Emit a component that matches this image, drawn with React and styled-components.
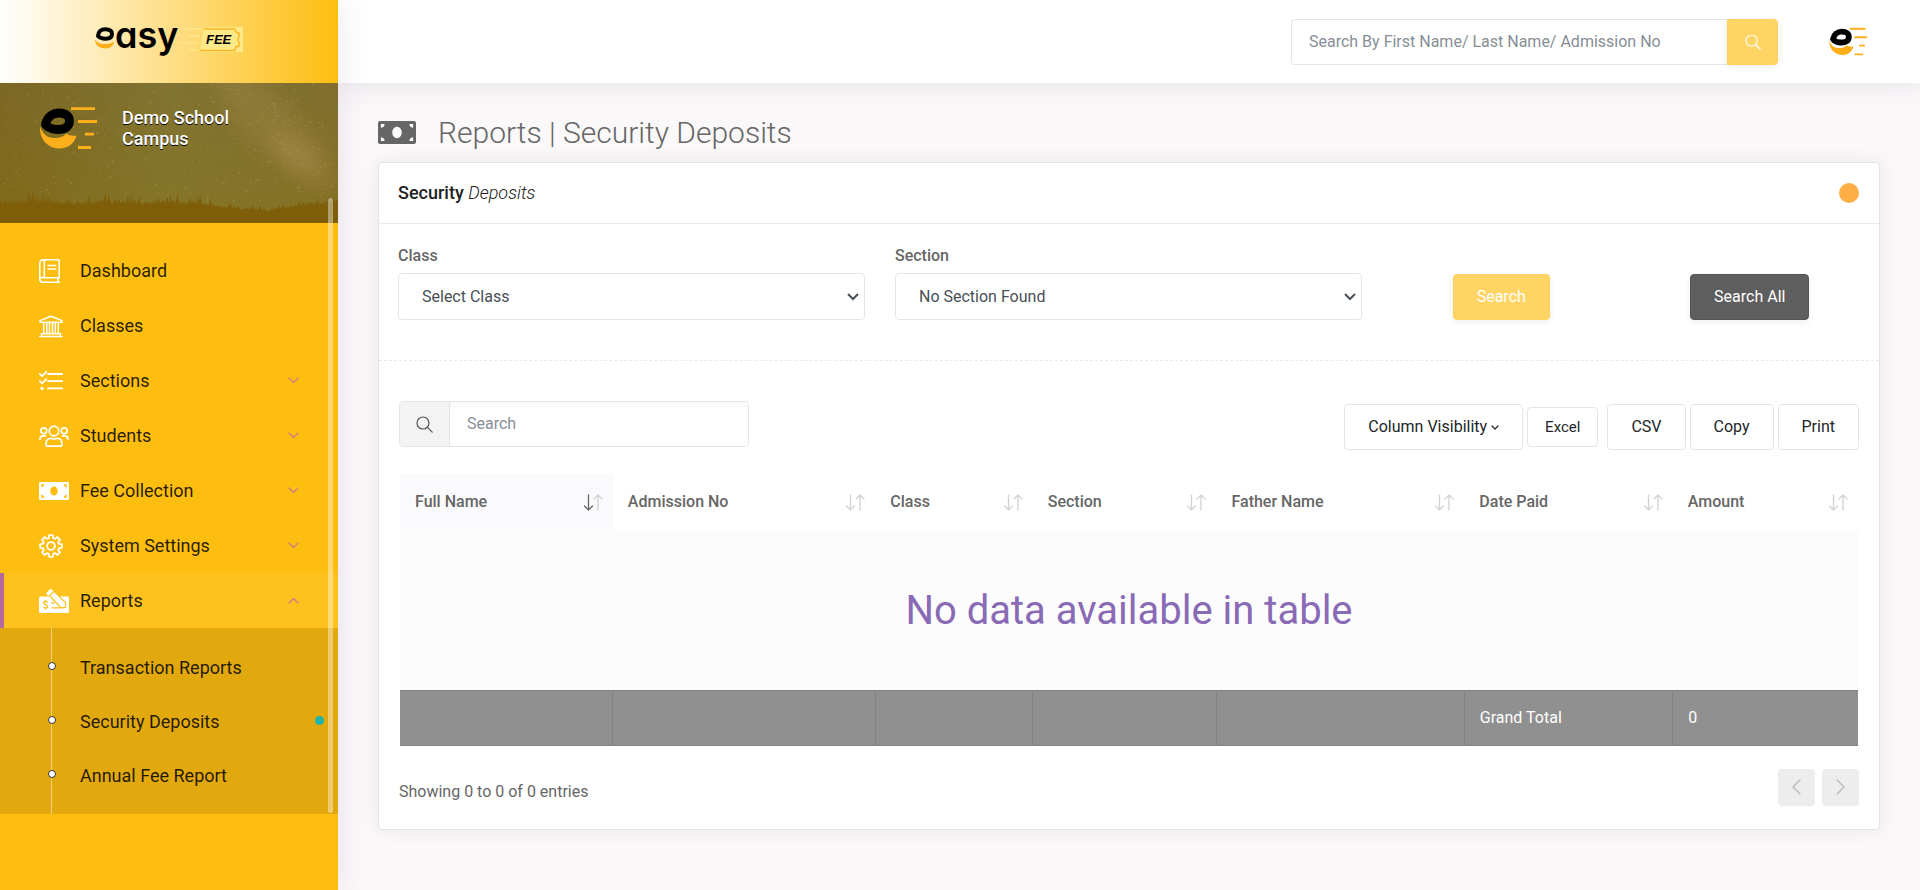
import React from "react";
import styled, { createGlobalStyle, css } from "styled-components";
import { FaMoneyBill } from "react-icons/fa";

const GlobalStyle = createGlobalStyle`
  *, *::before, *::after { box-sizing: border-box; }
  body {
    margin: 0;
    background: #faf8f9;
    color: #666;
    font-family: Roboto, "Liberation Sans", sans-serif;
    font-size: 16px;
    line-height: 24px;
  }
  button, input, select { font: inherit; }
  ul { list-style: none; margin: 0; padding: 0; }
  a { color: inherit; text-decoration: none; }
`;

/* ---------- Shell ---------- */

const Page = styled.div`
  display: flex;
  min-height: 100vh;
`;

const Sidebar = styled.aside`
  position: relative;
  z-index: 2;
  flex: 0 0 338px;
  background: #febe10;
  box-shadow: 0 0 28px rgba(86, 61, 124, 0.13);
`;

const Content = styled.div`
  flex: 1;
  min-width: 0;
`;

/* ---------- Sidebar ---------- */

const Brand = styled.a`
  display: flex;
  align-items: center;
  justify-content: center;
  height: 83px;
  background: linear-gradient(90deg, #fff 0%, #febe10 100%);
`;

const Profile = styled.div`
  position: relative;
  display: flex;
  align-items: flex-start;
  gap: 24px;
  height: 140px;
  padding: 23px 40px 0;
  overflow: hidden;
`;

const ProfileBackdrop = styled.svg`
  position: absolute;
  inset: 0;
  width: 100%;
  height: 100%;
`;

const ProfileMark = styled.div`
  position: relative;
  display: flex;
  width: 58px;
`;

const ProfileName = styled.div`
  position: relative;
  width: 120px;
  padding-top: 1px;
  color: #fff;
  font-size: 18px;
  font-weight: 500;
  line-height: 21px;
  text-shadow: 0 1px 0 #000;
`;

const NavList = styled.ul`
  padding-top: 20px;
`;

const NavLink = styled.a`
  display: flex;
  align-items: center;
  height: 55px;
  padding: 0 39px 0 35px;
  border-left: 4px solid transparent;
  color: rgba(0, 0, 0, 0.85);
  font-size: 18px;
  ${(p) =>
    p.$active &&
    css`
      border-left-color: #b56a9f;
      background: rgba(255, 255, 255, 0.06);
    `}
  .chevron { margin-left: auto; }
`;

const NavIcon = styled.span`
  display: flex;
  width: 41px;
  color: #fff;
`;

const SubList = styled.ul`
  padding: 13px 0 11px;
  background:
    linear-gradient(rgba(255, 255, 255, 0.45), rgba(255, 255, 255, 0.45)) 51px 0 / 1px 100% no-repeat,
    rgba(0, 0, 0, 0.11);
`;

const SubLink = styled.a`
  display: flex;
  align-items: center;
  height: 54px;
  padding: 0 14px 0 48px;
  color: rgba(0, 0, 0, 0.85);
  font-size: 18px;
  &::before {
    content: "";
    width: 8px;
    height: 8px;
    margin: 0 24px 4px 0;
    border: 1px solid #333;
    border-radius: 50%;
    background: #fff;
  }
`;

const ActiveDot = styled.span`
  width: 9px;
  height: 9px;
  margin: 0 0 4px auto;
  border-radius: 50%;
  background: #1fb5a8;
`;

const ScrollThumb = styled.div`
  position: absolute;
  top: 198px;
  left: 328px;
  width: 5px;
  height: 615px;
  border-radius: 3px;
  background: rgba(255, 255, 255, 0.4);
`;

/* ---------- Top bar ---------- */

const TopBar = styled.header`
  position: relative;
  z-index: 1;
  display: flex;
  align-items: center;
  justify-content: flex-end;
  gap: 51px;
  height: 83px;
  padding: 0 52px 0 40px;
  background: #fff;
  box-shadow: 0 0 28px rgba(86, 61, 124, 0.13);
`;

const StudentSearch = styled.form`
  display: flex;
  width: 487px;
  height: 46px;
`;

const StudentInput = styled.input`
  flex: 1;
  min-width: 0;
  padding: 0 17px;
  border: 1px solid #e5e5e5;
  border-right: 0;
  border-radius: 4px 0 0 4px;
  background: #fff;
  color: #495057;
  outline: none;
  &::placeholder { color: #868e96; opacity: 1; }
`;

const StudentButton = styled.button`
  display: flex;
  align-items: center;
  justify-content: center;
  width: 51px;
  border: 1px solid #fed15a;
  border-radius: 0 4px 4px 0;
  background: #fed564;
  color: #fff;
  box-shadow: 0 2px 6px rgba(0, 0, 0, 0.07);
`;

/* ---------- Page heading ---------- */

const Main = styled.main`
  padding: 27px 40px 60px;
`;

const PageTitle = styled.h1`
  display: flex;
  align-items: center;
  gap: 22px;
  margin: 0 0 6px;
  color: #666;
  font-size: 30px;
  font-weight: 300;
  line-height: 46px;
  svg { margin-bottom: 2px; }
`;

/* ---------- Panel ---------- */

const Panel = styled.section`
  border: 1px solid #e5e3e6;
  border-radius: 4px;
  background: #fff;
  box-shadow: 0 0 20px rgba(62, 44, 90, 0.08);
`;

const PanelHeader = styled.div`
  display: flex;
  align-items: center;
  justify-content: space-between;
  height: 61px;
  padding: 0 20px 0 19px;
  border-bottom: 1px solid #ebe9ec;
`;

const PanelTitle = styled.h2`
  margin: 0;
  color: #222;
  font-size: 18px;
  font-weight: 500;
  em { font-weight: 300; }
`;

const PanelToggle = styled.button`
  width: 20px;
  height: 20px;
  padding: 0;
  border: 0;
  border-radius: 50%;
  background: #ffae45;
`;

const Filters = styled.form`
  display: grid;
  grid-template-columns: 2fr 2fr 1fr 1fr;
  align-items: end;
  padding: 20px 5px 40px 4px;
  border-bottom: 1px dashed #e9e9e9;
`;

const Field = styled.div`
  display: flex;
  flex-direction: column;
  gap: 5px;
  padding: 0 15px;
`;

const Label = styled.label`
  font-weight: 500;
`;

const SelectBox = styled.div`
  position: relative;
  display: flex;
  color: #495057;
  svg {
    position: absolute;
    top: 20px;
    right: 6px;
    pointer-events: none;
  }
`;

const Select = styled.select`
  flex: 1;
  min-width: 0;
  height: 47px;
  padding: 0 23px;
  appearance: none;
  border: 1px solid #e5e5e5;
  border-radius: 4px;
  background: #fff;
  color: inherit;
`;

const SolidButton = styled.button`
  justify-self: center;
  height: 46px;
  padding: 0 23px;
  border: 1px solid ${(p) => (p.$dark ? "#555" : "#fed15a")};
  border-radius: 4px;
  background: ${(p) => (p.$dark ? "#5e5e5e" : "#fed564")};
  color: #fff;
  font-weight: 400;
  box-shadow: 0 2px 6px rgba(0, 0, 0, 0.07);
`;

/* ---------- Table area ---------- */

const TableArea = styled.div`
  padding: 40px 20px 23px;
`;

const Toolbar = styled.div`
  display: flex;
  align-items: flex-start;
  justify-content: space-between;
  margin-bottom: 24px;
`;

const TableSearch = styled.label`
  display: flex;
  width: 350px;
  height: 46px;
  overflow: hidden;
  border: 1px solid #e5e5e5;
  border-radius: 4px;
`;

const SearchIconBox = styled.span`
  display: flex;
  align-items: center;
  justify-content: center;
  width: 50px;
  border-right: 1px solid #e5e5e5;
  background: #f3f3f3;
  color: #555;
`;

const TableInput = styled.input`
  flex: 1;
  min-width: 0;
  padding: 0 17px;
  border: 0;
  background: linear-gradient(#f8f8f8, #fff 8px);
  color: #495057;
  outline: none;
  &::placeholder { color: #868e96; opacity: 1; }
`;

const ButtonGroup = styled.div`
  display: flex;
  align-items: center;
  gap: 4px;
  padding-top: 3px;
`;

const OutlineButton = styled.button`
  display: flex;
  align-items: center;
  gap: 4px;
  height: ${(p) => (p.$small ? 40 : 46)}px;
  margin-right: ${(p) => (p.$small ? 5 : 0)}px;
  padding: 0 ${(p) => (p.$small ? 17 : 23)}px;
  border: 1px solid #e5e5e5;
  border-radius: 4px;
  background: #fff;
  color: #212529;
  font-size: ${(p) => (p.$small ? 15 : 16)}px;
`;

const TableFrame = styled.div`
  padding: 0 1px;
`;

const Table = styled.table`
  width: 100%;
  table-layout: fixed;
  border-collapse: collapse;
`;

const HeadCell = styled.th`
  height: 56px;
  padding: 0 10px 0 15px;
  background: ${(p) => (p.$sorted ? "#fafafd" : "#fff")};
  font-weight: 500;
  text-align: left;
`;

const HeadContent = styled.div`
  display: flex;
  align-items: center;
  justify-content: space-between;
`;

const EmptyCell = styled.td`
  height: 160px;
  padding: 2px 0 0;
  background: #fcfcfc;
  color: #886ab5;
  font-size: 40px;
  line-height: 60px;
  text-align: center;
`;

const FootCell = styled.td`
  height: 55px;
  padding: 0 15px;
  border: 1px solid #818181;
  background: #909090;
  color: #fff;
  &:first-child { border-left: 0; }
  &:last-child { border-right: 0; }
`;

const TableFooter = styled.div`
  display: flex;
  align-items: center;
  justify-content: space-between;
  margin-top: 23px;
`;

const Summary = styled.p`
  margin: 0;
  padding-top: 10px;
`;

const Pager = styled.div`
  display: flex;
  gap: 7px;
`;

const PagerButton = styled.button`
  display: flex;
  align-items: center;
  justify-content: center;
  width: 37px;
  height: 37px;
  padding: 0;
  border: 0;
  border-radius: 4px;
  background: #ededed;
  color: #b8b8b8;
`;

/* ---------- Drawings ---------- */

function Line({ w = 24, h = 24, vw = w, vh = h, sw = 1.8, children, ...rest }) {
  return (
    <svg width={w} height={h} viewBox={`0 0 ${vw} ${vh}`} fill="none" stroke="currentColor"
      strokeWidth={sw} strokeLinecap="round" strokeLinejoin="round" aria-hidden="true" {...rest}>
      {children}
    </svg>
  );
}

const BookIcon = () => (
  <Line w={21} sw={1.6}>
    <path d="M20.2 18.2V1.8a1 1 0 0 0-1-1H4A3.2 3.2 0 0 0 .8 4v16A3.2 3.2 0 0 0 4 23.200h16.200M20.200 18.700H4A2.200 2.200 0 0 0 .8 21M19 18.700v4.500M5.300 1v17.500M9 6.500h7.800M9 10h7.800" />
  </Line>
);

const BankIcon = () => (
  <Line w={24} h={24} sw={1.5}>
    <path d="M12 2.200 1 6.600v1.600h22V6.600zM.8 22.600h22.400M2.500 22V19.800h19V22M4.700 8.500v11M7.800 8.500v11M10.500 8.500v11M13.500 8.500v11M16.300 8.500v11M19.300 8.500v11" />
  </Line>
);

const TasksIcon = () => (
  <Line sw={1.8}>
    <path d="M9 5h14.200M9 12.200h14.200M9 19.400h14.200M.9 5l2.200 2.200L7.200 3M.9 12.200l2.200 2.200 4.100-4.200" />
    <circle cx="3" cy="19.400" r="1.600" fill="currentColor" stroke="none" />
  </Line>
);

const UsersIcon = () => (
  <Line w={30} h={24} sw={1.7}>
    <circle cx="15" cy="7" r="4.800" />
    <circle cx="4.800" cy="6.800" r="2.900" />
    <circle cx="25.200" cy="6.800" r="2.900" />
    <path d="M7 20.400c0-4 1.700-6 4.700-6 1.200 0 1.800.5 3.300.5s2.100-.5 3.300-.5c3 0 4.700 2 4.700 6 0 1-.7 1.700-1.700 1.700H8.700c-1 0-1.700-.7-1.700-1.700zM1 15.200c0-2.200 1-3.400 3.200-3.400h2.300M29 15.200c0-2.200-1-3.400-3.200-3.400h-2.300" />
  </Line>
);

const gearPath = (() => {
  const points = [];
  for (let i = 0; i < 8; i += 1) {
    [[-0.27, 8.2], [-0.17, 11], [0.17, 11], [0.27, 8.2]].forEach(([off, r]) => {
      const a = (i * Math.PI) / 4 + off;
      points.push(`${(12 + r * Math.sin(a)).toFixed(2)} ${(12 - r * Math.cos(a)).toFixed(2)}`);
    });
  }
  return `M${points.join("L")}Z`;
})();

const GearIcon = () => (
  <Line sw={1.8}>
    <path d={gearPath} />
    <circle cx="12" cy="12" r="3.900" />
  </Line>
);

const ChequeIcon = () => (
  <svg width="30" height="24" viewBox="0 0 30 24" aria-hidden="true">
    <path fill="#fff" d="M1.500 7.500h27A1.500 1.500 0 0 1 30 9v13.500a1.500 1.500 0 0 1-1.500 1.500h-27A1.500 1.500 0 0 1 0 22.500V9a1.500 1.500 0 0 1 1.500-1.500z" />
    <path fill="none" stroke="#fec01c" strokeWidth="1.300" d="M12.500 18.800h13M12.500 14h3M8.600 13.300c-.6-.6-1.500-.8-2.300-.8-1 0-1.800.5-1.800 1.500 0 2.300 4.200 1.100 4.200 3.500 0 1-.8 1.500-1.900 1.500-1 0-1.700-.3-2.300-.8M6.500 11v1.500M6.500 19v1.500" />
    <path fill="#fff" stroke="#fec01c" strokeWidth="1.200" d="m10.500 6.500 4.500-4.200L26.500 13.500v5h-5z" />
    <path fill="#fff" d="M7.800 3.400 10.600.6a1.600 1.600 0 0 1 2.200 0l1.500 1.500-4.800 4.700L7.800 5.400a1.500 1.500 0 0 1 0-2z" />
  </svg>
);

const Chevron = ({ up }) => (
  <Line className="chevron" w={11} h={7} sw={1.5} stroke="#d0857a">
    <path d={up ? "M1 6l4.500-4.500L10 6" : "M1 1l4.500 4.500L10 1"} />
  </Line>
);

const SelectArrow = () => (
  <Line w={12} h={8} sw={2} strokeLinecap="butt" strokeLinejoin="miter">
    <path d="M1 1l5 5 5-5" />
  </Line>
);

const SearchIcon = ({ size = 17 }) => (
  <Line w={size} h={size} vw={17} vh={17} sw={1.200}>
    <circle cx="7" cy="7" r="6" />
    <path d="m11.400 11.400 4.800 4.800" />
  </Line>
);

const SortIcon = ({ sorted }) => (
  <Line w={20} h={17} sw={1.300} stroke="#d2d2d2">
    <path stroke={sorted ? "#666" : "#d2d2d2"} d="M5.500 1v15M1.500 12l4 4 4-4" />
    <path d="M15 16V1M11 5l4-4 4 4" />
  </Line>
);

/* Round "e" with an orange smile and speed lines */
const Mark = ({ width, height }) => (
  <svg width={width} height={height} viewBox="0 0 58 44" aria-hidden="true">
    <path fill="#fcaf1b" d="M0 20c2 7.500 7 12 14.500 12 5 0 8.500-1 12-4.500 2 2 6 2.500 10 2C34.500 37.500 28 42.500 19.500 42.500 8 42.500-1 33 0 20z" />
    <path fill="none" stroke="#000" strokeWidth="8.800" strokeLinejoin="round" d="M5.500 18.500C7 11 12.500 7 19 7c6.500 0 10.500 3 10.500 8 0 5.500-4.500 8.500-11.500 8.500-5 0-9-.5-12.500-5z" />
    <g stroke="#fcaf1b" strokeWidth="2.800">
      <path d="M31 2.700h24M38 15.500h19M45 28.200h9M38 41.500h13" />
    </g>
  </svg>
);

const BrandLogo = () => (
  <svg width="148" height="61" viewBox="0 0 148 61" role="img" aria-label="easy FEE">
    <path fill="#fcaf1b" d="M0 28.500c2.500 3.500 5.500 4.500 9.500 4.500s7-.5 9.500-2.500c0 4-3.500 7-9 7S0 34 0 28.500z" />
    <path fill="none" stroke="#000" strokeWidth="4" strokeLinejoin="round" d="M3 25C3 20.500 6 18.200 10.300 18.200S17 20 17 23s-2.500 4.700-6.300 4.700-6-.7-7.700-2.700z" />
    <text x="20" y="37" fill="#000" fontFamily='Inter, "Liberation Sans", sans-serif' fontSize="36" fontWeight="600"
      style={{ fontFeatureSettings: '"cv11"' }}>asy</text>
    <g stroke="#fee488" strokeWidth="2">
      <path d="M87 18h19M94 25h11M84 32h19M93 39h9" />
    </g>
    <path fill="#fee988" d="M109 16h39v25h-42z" />
    <path fill="#fee988" d="M108.500 17.500h31l4.500 4.500v13l-4.500 4.500h-34z" />
    <path fill="none" stroke="#fbb621" strokeWidth="1.500" d="M109 18h31c0 2.500 1.500 4 4 4v4c-1.500 1-1.500 4 0 5v4c-2.500 0-4 1.500-4 4.500h-35" />
    <text x="111" y="33" fill="#000" fontFamily='"Liberation Sans", sans-serif' fontSize="13" fontWeight="700" fontStyle="italic">FEE</text>
  </svg>
);

/* Starry sky and tree line behind the school name */
function makeScene() {
  let seed = 7;
  const rnd = () => {
    seed = (seed * 16807) % 2147483647;
    return seed / 2147483647;
  };
  const stars = [];
  for (let i = 0; i < 520; i += 1) {
    stars.push({ x: rnd() * 338, y: rnd() * 122, r: 0.3 + rnd() * 0.5, o: 0.08 + rnd() * 0.27 });
  }
  for (let i = 0; i < 200; i += 1) {
    const t = rnd();
    const spread = (rnd() + rnd() + rnd() - 1.5) * 70;
    stars.push({ x: 235 + t * 95 + spread, y: t * 110 - spread * 0.3, r: 0.3 + rnd() * 0.5, o: 0.08 + rnd() * 0.25 });
  }
  let trees = "M0 140V117";
  let x = 0;
  while (x < 338) {
    const ground = x < 190 ? 122 : x < 260 ? 122 + (x - 190) * 0.1 : 129 - (x - 260) * 0.13;
    const grove = x < 210 ? 7 + 7 * Math.abs(Math.sin(x / 23)) : 4 + 3 * Math.abs(Math.sin(x / 15));
    const w = 2 + rnd() * 3;
    const top = ground - rnd() * grove;
    trees += `L${x.toFixed(1)} ${(ground - grove * 0.2).toFixed(1)}L${(x + w / 2).toFixed(1)} ${top.toFixed(1)}L${(x + w).toFixed(1)} ${(ground - grove * 0.1).toFixed(1)}`;
    x += w;
  }
  return { stars, trees: `${trees}L338 118V140Z` };
}

const scene = makeScene();

const Backdrop = () => (
  <ProfileBackdrop viewBox="0 0 338 140" preserveAspectRatio="none" aria-hidden="true">
    <defs>
      <linearGradient id="sky" x1="0" y1="0" x2="1" y2="0">
        <stop offset="0" stopColor="#806818" />
        <stop offset="0.5" stopColor="#86772a" />
        <stop offset="1" stopColor="#857025" />
      </linearGradient>
      <linearGradient id="dusk" x1="0" y1="0" x2="0" y2="1">
        <stop offset="0" stopColor="#70664a" stopOpacity="0.25" />
        <stop offset="1" stopColor="#80701c" stopOpacity="0.2" />
      </linearGradient>
      <filter id="glow" x="-50%" y="-50%" width="200%" height="200%">
        <feGaussianBlur stdDeviation="10" />
      </filter>
    </defs>
    <rect width="338" height="140" fill="url(#sky)" />
    <rect width="338" height="140" fill="url(#dusk)" />
    <g filter="url(#glow)" fill="#b39452">
      <ellipse cx="275" cy="45" rx="80" ry="24" opacity="0.25" transform="rotate(45 275 45)" />
      <ellipse cx="296" cy="72" rx="28" ry="10" opacity="0.45" transform="rotate(38 296 72)" />
    </g>
    {scene.stars.map((s, i) => (
      <circle key={i} cx={s.x} cy={s.y} r={s.r} fill="#e6cf8c" opacity={s.o} />
    ))}
    <path d={scene.trees} fill="#7f5e09" />
  </ProfileBackdrop>
);

/* ---------- Data ---------- */

const navItems = [
  { label: "Dashboard", Icon: BookIcon },
  { label: "Classes", Icon: BankIcon },
  { label: "Sections", Icon: TasksIcon, nested: true },
  { label: "Students", Icon: UsersIcon, nested: true },
  { label: "Fee Collection", Icon: () => <FaMoneyBill size={24} style={{ width: 30 }} />, nested: true },
  { label: "System Settings", Icon: GearIcon, nested: true },
  {
    label: "Reports",
    Icon: ChequeIcon,
    nested: true,
    children: ["Transaction Reports", "Security Deposits", "Annual Fee Report"],
  },
];

const columns = [
  { label: "Full Name", width: "14.6%", sorted: true },
  { label: "Admission No", width: "18%" },
  { label: "Class", width: "10.8%" },
  { label: "Section", width: "12.6%" },
  { label: "Father Name", width: "17%" },
  { label: "Date Paid", width: "14.3%" },
  { label: "Amount", width: "12.7%" },
];

export default function App() {
  return (
    <>
      <GlobalStyle />
      <Page>
        <Sidebar>
          <Brand href="#"><BrandLogo /></Brand>
          <Profile>
            <Backdrop />
            <ProfileMark><Mark width={58} height={44} /></ProfileMark>
            <ProfileName>Demo School Campus</ProfileName>
          </Profile>
          <nav>
            <NavList>
              {navItems.map(({ label, Icon, nested, children }) => (
                <li key={label}>
                  <NavLink href="#" $active={Boolean(children)}>
                    <NavIcon><Icon /></NavIcon>
                    {label}
                    {nested && <Chevron up={Boolean(children)} />}
                  </NavLink>
                  {children && (
                    <SubList>
                      {children.map((child) => (
                        <li key={child}>
                          <SubLink href="#">
                            {child}
                            {child === "Security Deposits" && <ActiveDot />}
                          </SubLink>
                        </li>
                      ))}
                    </SubList>
                  )}
                </li>
              ))}
            </NavList>
          </nav>
          <ScrollThumb />
        </Sidebar>

        <Content>
          <TopBar>
            <StudentSearch>
              <StudentInput type="text" aria-label="Search students" placeholder="Search By First Name/ Last Name/ Admission No" />
              <StudentButton type="button" aria-label="Search students"><SearchIcon size={16} /></StudentButton>
            </StudentSearch>
            <Mark width={39} height={29} />
          </TopBar>

          <Main>
            <PageTitle>
              <FaMoneyBill size={31} style={{ width: 38 }} />
              Reports | Security Deposits
            </PageTitle>

            <Panel>
              <PanelHeader>
                <PanelTitle>Security <em>Deposits</em></PanelTitle>
                <PanelToggle type="button" aria-label="Collapse panel" />
              </PanelHeader>

              <Filters>
                <Field>
                  <Label htmlFor="class">Class</Label>
                  <SelectBox>
                    <Select id="class"><option>Select Class</option></Select>
                    <SelectArrow />
                  </SelectBox>
                </Field>
                <Field>
                  <Label htmlFor="section">Section</Label>
                  <SelectBox>
                    <Select id="section"><option>No Section Found</option></Select>
                    <SelectArrow />
                  </SelectBox>
                </Field>
                <SolidButton type="button">Search</SolidButton>
                <SolidButton type="button" $dark>Search All</SolidButton>
              </Filters>

              <TableArea>
                <Toolbar>
                  <TableSearch>
                    <SearchIconBox><SearchIcon /></SearchIconBox>
                    <TableInput type="search" aria-label="Search table" placeholder="Search" />
                  </TableSearch>
                  <ButtonGroup>
                    <OutlineButton type="button">
                      Column Visibility
                      <Line w={8} h={5} sw={1.200}><path d="M1 1l3 3 3-3" /></Line>
                    </OutlineButton>
                    <OutlineButton type="button" $small>Excel</OutlineButton>
                    <OutlineButton type="button">CSV</OutlineButton>
                    <OutlineButton type="button">Copy</OutlineButton>
                    <OutlineButton type="button">Print</OutlineButton>
                  </ButtonGroup>
                </Toolbar>

                <TableFrame>
                  <Table>
                    <colgroup>
                      {columns.map((c) => <col key={c.label} style={{ width: c.width }} />)}
                    </colgroup>
                    <thead>
                      <tr>
                        {columns.map((c) => (
                          <HeadCell key={c.label} scope="col" $sorted={c.sorted}>
                            <HeadContent>{c.label}<SortIcon sorted={c.sorted} /></HeadContent>
                          </HeadCell>
                        ))}
                      </tr>
                    </thead>
                    <tbody>
                      <tr><EmptyCell colSpan={7}>No data available in table</EmptyCell></tr>
                    </tbody>
                    <tfoot>
                      <tr>
                        {["", "", "", "", "", "Grand Total", "0"].map((value, i) => (
                          <FootCell key={i}>{value}</FootCell>
                        ))}
                      </tr>
                    </tfoot>
                  </Table>
                </TableFrame>

                <TableFooter>
                  <Summary>Showing 0 to 0 of 0 entries</Summary>
                  <Pager>
                    <PagerButton type="button" aria-label="Previous page">
                      <Line w={9} h={16} sw={1.300}><path d="M8 1L1 8l7 7" /></Line>
                    </PagerButton>
                    <PagerButton type="button" aria-label="Next page">
                      <Line w={9} h={16} sw={1.300}><path d="M1 1l7 7-7 7" /></Line>
                    </PagerButton>
                  </Pager>
                </TableFooter>
              </TableArea>
            </Panel>
          </Main>
        </Content>
      </Page>
    </>
  );
}
